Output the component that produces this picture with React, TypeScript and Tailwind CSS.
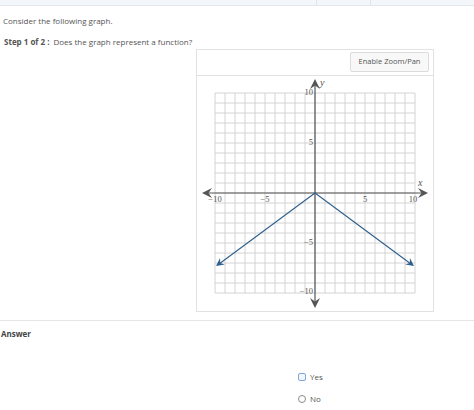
import React from "react";

const tk = "font-['Liberation_Serif',serif] text-[8.5px] fill-[#555]";
const lbl = "font-['Liberation_Serif',serif] text-[10px] italic fill-[#555]";

function tip(x: number, y: number, dx: number, dy: number, s = 7) {
  const len = Math.hypot(dx, dy);
  const ux = dx / len, uy = dy / len;
  const bx = x - ux * s, by = y - uy * s;
  const px = -uy * (s * 0.5), py = ux * (s * 0.5);
  const mx = x - ux * s * 0.65, my = y - uy * s * 0.65;
  return `M${x},${y} L${bx + px},${by + py} L${mx},${my} L${bx - px},${by - py} Z`;
}

function Graph() {
  const ox = 118;
  const oy = 117;
  const u = 10;
  const lines: React.ReactNode[] = [];
  for (let i = -10; i <= 10; i++) {
    lines.push(
      <line key={"v" + i} x1={ox + i * u} y1={oy - 100} x2={ox + i * u} y2={oy + 100} stroke="#c9c9c9" strokeWidth={0.8} />
    );
    lines.push(
      <line key={"h" + i} x1={ox - 100} y1={oy + i * u} x2={ox + 100} y2={oy + i * u} stroke="#c9c9c9" strokeWidth={0.8} />
    );
  }
  const ax = "#555";
  const blue = "#2f5f8c";
  return (
    <svg width={236} height={235} viewBox="0 0 236 235">
      {lines}
      <line x1={8} y1={oy} x2={228} y2={oy} stroke={ax} strokeWidth={1.2} />
      <line x1={ox} y1={5} x2={ox} y2={230} stroke={ax} strokeWidth={1.2} />
      <path d={tip(5, oy, -1, 0, 10)} fill={ax} />
      <path d={tip(231, oy, 1, 0, 10)} fill={ax} />
      <path d={tip(ox, 3, 0, -1, 10)} fill={ax} />
      <path d={tip(ox, 232, 0, 1, 10)} fill={ax} />
      <line x1={ox} y1={oy} x2={22} y2={188} stroke={blue} strokeWidth={1.1} />
      <line x1={ox} y1={oy} x2={214} y2={188} stroke={blue} strokeWidth={1.1} />
      <path d={tip(19, 190, -96, 71, 8)} fill={blue} />
      <path d={tip(217, 190, 96, 71, 8)} fill={blue} />
      <text x={123} y={10} className={lbl}>y</text>
      <text x={221} y={110} className={lbl}>x</text>
      <text x={116} y={19} textAnchor="end" className={tk}>10</text>
      <text x={116} y={69} textAnchor="end" className={tk}>5</text>
      <text x={116} y={169} textAnchor="end" className={tk}>−5</text>
      <text x={116} y={218} textAnchor="end" className={tk}>−10</text>
      <text x={18} y={126} textAnchor="middle" className={tk}>−10</text>
      <text x={68} y={126} textAnchor="middle" className={tk}>−5</text>
      <text x={168} y={126} textAnchor="middle" className={tk}>5</text>
      <text x={216} y={126} textAnchor="middle" className={tk}>10</text>
    </svg>
  );
}

export default function App() {
  return (
    <div className="w-[474px] h-[410px] bg-white overflow-hidden text-[#555] font-['Open_Sans','Noto_Sans',sans-serif]">
      <div className="h-[6px] bg-[#f3f6fa] border-b border-[#e2e7ee] flex">
        <div className="w-[317px] border-r border-[#dfe4ea]" />
        <div className="w-[54px] border-r border-[#dfe4ea]" />
        <div className="flex-1" />
      </div>
      <div className="pl-[3px] pt-[9px] text-[8px] leading-[12px]">Consider the following graph.</div>
      <div className="pl-[4px] pt-[9px] text-[8px] leading-[12px] flex items-baseline">
        <span className="font-bold">Step 1 of 2 :</span>
        <span className="ml-[4px]">Does the graph represent a function?</span>
      </div>
      <div className="ml-[196px] mt-[1px] w-[238px] h-[263px] border border-[#e2e2e2] flex flex-col">
        <div className="h-[26px] shrink-0 border-b border-[#e2e2e2] flex justify-end items-start pt-[2px] pr-[4px]">
          <div className="w-[79px] h-[20px] border border-[#dcdcdc] bg-[#f8f8f8] rounded-[2px] text-[7.5px] flex items-center justify-center text-[#555]">
            Enable Zoom/Pan
          </div>
        </div>
        <div className="flex-1 overflow-hidden">
          <Graph />
        </div>
      </div>
      <div className="mt-[8px] border-t border-[#e6e6e6]" />
      <div className="pt-[7px] pl-[1px] text-[8px] leading-[12px] font-bold text-[#444]">Answer</div>
      <div className="ml-[298px] mt-[31px] flex flex-col gap-[10px] text-[8px] leading-[12px]">
        <div className="flex items-center gap-[4px]">
          <div className="w-[8px] h-[8px] rounded-[2px] border border-[#7fa8d6] bg-[#f0f6fc]" />
          <span>Yes</span>
        </div>
        <div className="flex items-center gap-[4px]">
          <div className="w-[8px] h-[8px] rounded-full border border-[#8a8a8a]" />
          <span>No</span>
        </div>
      </div>
    </div>
  );
}
